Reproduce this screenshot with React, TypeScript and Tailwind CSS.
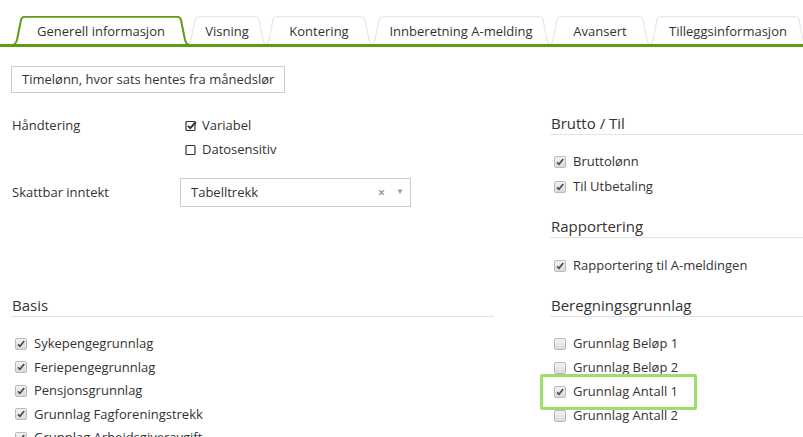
import React from "react";

type TabDef = { label: string; w: number; cls: string; active?: boolean };

const tabs: TabDef[] = [
  { label: "Generell informasjon", w: 178, cls: "w-[178px]", active: true },
  { label: "Visning", w: 82, cls: "w-[82px] -ml-[4px]" },
  { label: "Kontering", w: 110, cls: "w-[110px] -ml-[4px]" },
  { label: "Innberetning A-melding", w: 182, cls: "w-[182px] -ml-[4px]" },
  { label: "Avansert", w: 104, cls: "w-[104px] -ml-[4px]" },
  { label: "Tilleggsinformasjon", w: 160, cls: "w-[160px] -ml-[4px]" },
];

function tabPath(w: number, h: number) {
  return `M0,${h} C3,${h} 4,${h - 2} 5,${h - 5} L9,4 C9.6,1.6 11,0.8 13,0.8 L${w - 13},0.8 C${w - 11},0.8 ${w - 9.6},1.6 ${w - 9},4 L${w - 5},${h - 5} C${w - 4},${h - 2} ${w - 3},${h} ${w},${h}`;
}

function Tab({ t }: { t: TabDef }) {
  const h = 29;
  return (
    <div className={`relative h-[28px] flex items-center justify-center pt-[3px] shrink-0 ${t.cls} ${t.active ? "z-10" : "z-0"}`}>
      <svg className="absolute left-0 top-0" width={t.w} height={h} viewBox={`0 0 ${t.w} ${h}`}>
        <path
          d={tabPath(t.w, h)}
          fill="#ffffff"
          stroke={t.active ? "#5f9c12" : "#e2e2e2"}
          strokeWidth={t.active ? 2 : 1}
        />
      </svg>
      <span className="relative text-[13px] text-[#333]">{t.label}</span>
    </div>
  );
}

function FaCheck({ checked }: { checked: boolean }) {
  return (
    <svg width="12" height="12" viewBox="0 0 12 12" className="shrink-0">
      <rect x="1" y="1.5" width="9" height="9" rx="1" fill="none" stroke="#333" strokeWidth="1.2" />
      {checked && <path d="M3,5.8 L5.3,8.2 L10.8,2" fill="none" stroke="#333" strokeWidth="1.9" />}
    </svg>
  );
}

function NativeBox({ checked }: { checked: boolean }) {
  return (
    <span className="relative w-[12px] h-[12px] rounded-[2px] border border-[#bababa] bg-gradient-to-b from-[#f3f3f3] to-[#dadada] shrink-0 flex items-center justify-center">
      {checked && (
        <svg width="10" height="10" viewBox="0 0 10 10">
          <path d="M2,5.3 L4,7.3 L8.2,2" fill="none" stroke="#4a4a4a" strokeWidth="1.7" />
        </svg>
      )}
    </span>
  );
}

function CheckItem({ label, checked, h = "h-[23.5px]" }: { label: string; checked: boolean; h?: string }) {
  return (
    <div className={`flex items-center ${h}`}>
      <span className="w-[23px] pl-[4px] flex">
        <NativeBox checked={checked} />
      </span>
      <span className="text-[13px] text-[#333] whitespace-nowrap">{label}</span>
    </div>
  );
}

function Heading({ children }: { children: React.ReactNode }) {
  return (
    <div className="text-[15px] leading-[22px] text-[#333] border-b border-[#e3e3e3] pl-[1px] whitespace-nowrap">
      {children}
    </div>
  );
}

export default function App() {
  return (
    <div className="w-[803px] h-[437px] overflow-hidden bg-white font-['Open_Sans',sans-serif] text-[#333]">
      <div className="flex pt-[16px] pl-[12px] border-b-[3px] border-[#5f9c12] overflow-hidden">
        {tabs.map((t) => (
          <Tab key={t.label} t={t} />
        ))}
      </div>

      <div className="pl-[11px]">
        <div className="flex">
          <div className="w-[483px] shrink-0">
            <div className="mt-[19px] w-[274px] h-[27px] border border-[#cccccc] flex items-center pl-[10px] text-[13px] whitespace-nowrap">
              Timelønn, hvor sats hentes fra månedslør
            </div>

            <div className="mt-[21px] flex">
              <div className="w-[174px] pl-[1px] h-[24px] flex items-center text-[13px]">Håndtering</div>
              <div className="flex flex-col">
                <div className="h-[24px] flex items-center gap-[5px] text-[13px]">
                  <FaCheck checked />
                  <span>Variabel</span>
                </div>
                <div className="h-[24px] flex items-center gap-[5px] text-[13px]">
                  <FaCheck checked={false} />
                  <span>Datosensitiv</span>
                </div>
              </div>
            </div>

            <div className="mt-[16px] flex items-center">
              <div className="w-[169px] pl-[1px] text-[13px]">Skattbar inntekt</div>
              <div className="w-[231px] h-[29px] border border-[#cccccc] flex items-center pl-[10px] text-[13px]">
                <span className="flex-1">Tabelltrekk</span>
                <span className="text-[#9a9a9a] text-[13px] font-bold mr-[11px]">×</span>
                <span className="text-[#9a9a9a] text-[8px] mr-[6px] -mt-[4px]">▼</span>
              </div>
            </div>
          </div>

          <div className="ml-[56px] flex-1">
            <div className="mt-[65px]">
              <Heading>Brutto / Til</Heading>
            </div>
            <div className="mt-[14px]">
              <CheckItem label="Bruttolønn" checked h="h-[25px]" />
              <CheckItem label="Til Utbetaling" checked h="h-[25px]" />
            </div>
            <div className="mt-[16px]">
              <Heading>Rapportering</Heading>
            </div>
            <div className="mt-[15.5px]">
              <CheckItem label="Rapportering til A-meldingen" checked h="h-[25px]" />
            </div>
          </div>
        </div>

        <div className="flex mt-[15.5px]">
          <div className="w-[483px] shrink-0">
            <Heading>Basis</Heading>
            <div className="mt-[15px]">
              <CheckItem label="Sykepengegrunnlag" checked />
              <CheckItem label="Feriepengegrunnlag" checked />
              <CheckItem label="Pensjonsgrunnlag" checked />
              <CheckItem label="Grunnlag Fagforeningstrekk" checked />
              <CheckItem label="Grunnlag Arbeidsgiveravgift" checked />
            </div>
          </div>
          <div className="ml-[56px] flex-1">
            <Heading>Beregningsgrunnlag</Heading>
            <div className="mt-[14.5px] relative">
              <CheckItem label="Grunnlag Beløp 1" checked={false} h="h-[24px]" />
              <CheckItem label="Grunnlag Beløp 2" checked={false} h="h-[24px]" />
              <CheckItem label="Grunnlag Antall 1" checked h="h-[24px]" />
              <CheckItem label="Grunnlag Antall 2" checked={false} h="h-[24px]" />
              <div className="absolute left-[-10px] top-[42px] w-[157px] h-[36px] border-[3px] border-[#9bdf6d] rounded-[2px]" />
            </div>
          </div>
        </div>
      </div>
    </div>
  );
}
